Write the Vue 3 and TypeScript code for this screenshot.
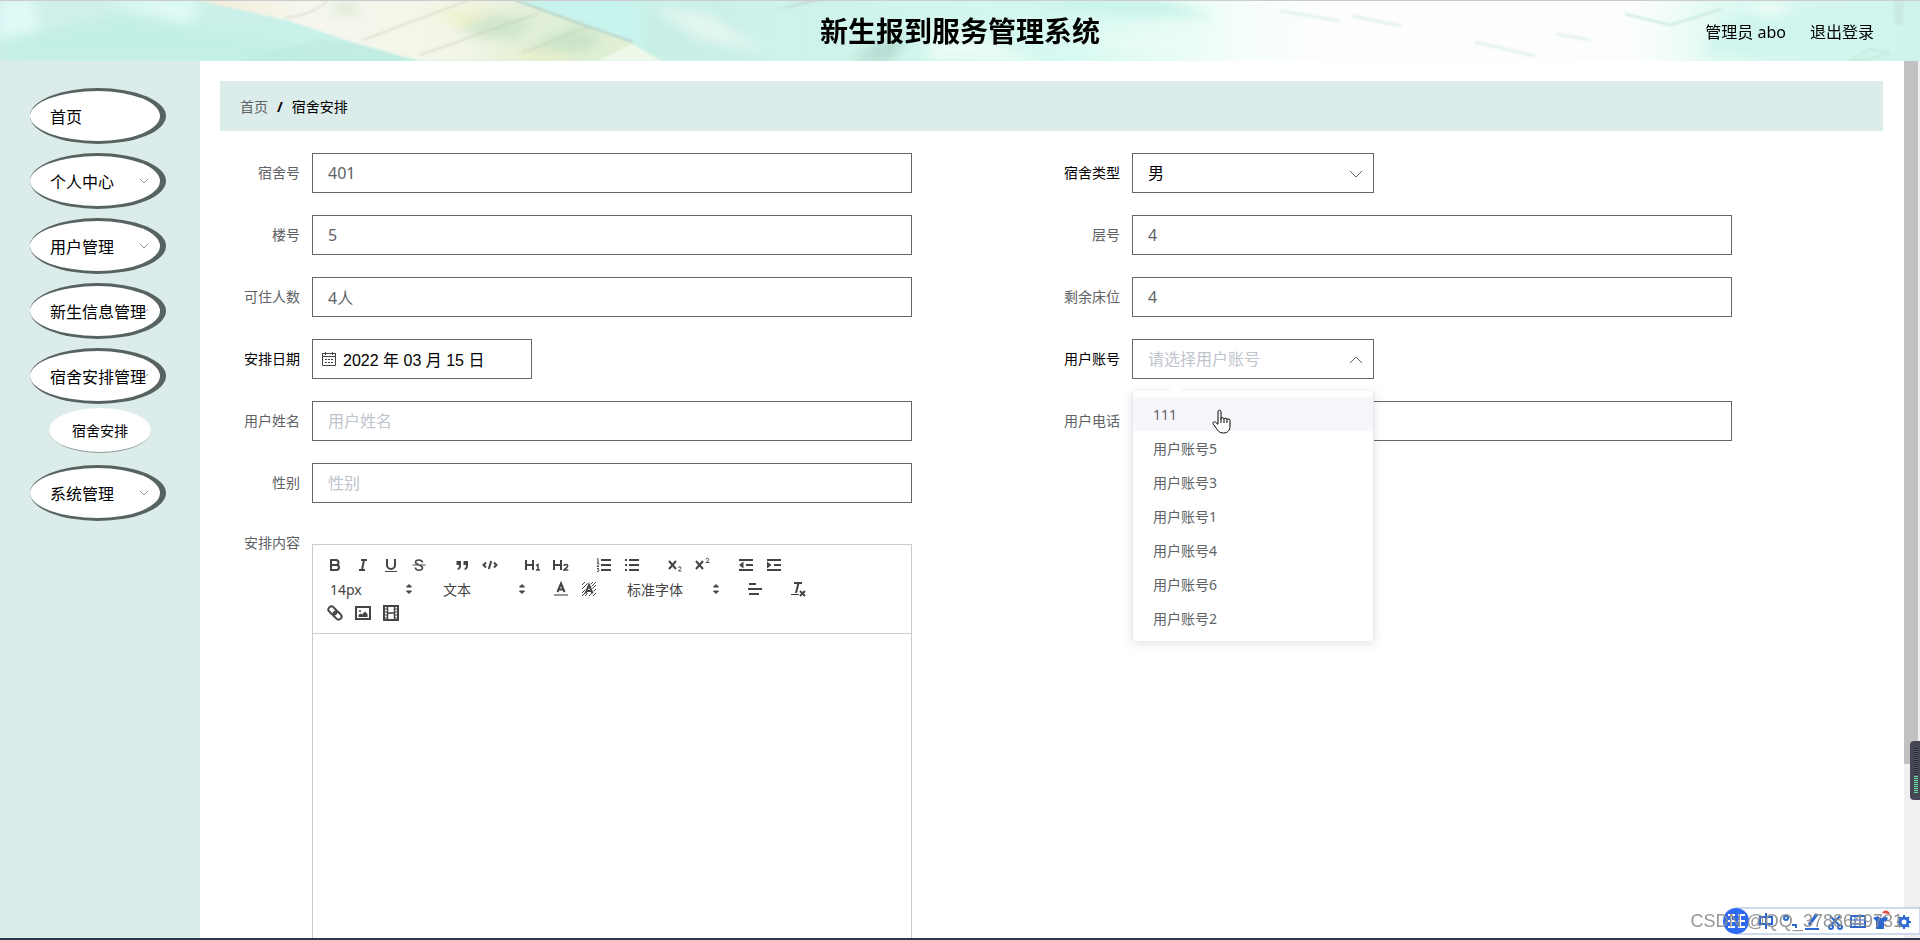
<script setup lang="ts">
import { ref } from 'vue'

interface MenuItem {
  label: string
  arrow: boolean
  children?: string[]
}

interface Tool {
  name: string
  body: string
}

interface Picker {
  label: string
  options: string[]
  wide?: boolean
}

interface ToolGroup {
  tools?: Tool[]
  picker?: Picker
}

const menu: MenuItem[] = [
  { label: '首页', arrow: false },
  { label: '个人中心', arrow: true },
  { label: '用户管理', arrow: true },
  { label: '新生信息管理', arrow: true },
  { label: '宿舍安排管理', arrow: true, children: ['宿舍安排'] },
  { label: '系统管理', arrow: true },
]

const roomNo = ref('401')
const roomType = ref('男')
const building = ref('5')
const floor = ref('4')
const capacity = ref('4人')
const bedsLeft = ref('4')
const date = ref('2022 年 03 月 15 日')
const account = ref('')
const userName = ref('')
const phone = ref('')
const gender = ref('')

const accounts = ['111', '用户账号5', '用户账号3', '用户账号1', '用户账号4', '用户账号6', '用户账号2']
const hovered = ref(0)
const open = ref(true)

function choose(name: string) {
  account.value = name
  open.value = false
}

const groups: ToolGroup[] = [
  {
    tools: [
      { name: '粗体', body: '<path d="M5 4h5a2.5 2.5 0 0 1 0 5H5zM5 9h5.5a2.5 2.5 0 0 1 0 5H5z"/>' },
      { name: '斜体', body: '<path d="M7 4h6M5 14h6M10 4L8 14"/>' },
      { name: '下划线', body: '<path d="M5 3v6a4 4 0 0 0 8 0V3"/><path d="M3 15.500h12" stroke-width="1"/>' },
      { name: '删除线', body: '<path d="M2.500 9h13" stroke-width="1"/><path d="M12.500 6.500C12 3.300 5.500 3.300 5.500 6c0 1.500 1.500 2 3.500 2.700M9.500 9.300c2 .700 3 1.200 3 2.700 0 3-6.800 3-7.200-.500" stroke-width="1.600"/>' },
    ],
  },
  {
    tools: [
      { name: '引用', body: '<path class="fill" d="M3.500 5H8v4.500C8 12 7 13.500 4.500 14v-1.500C5.700 12 6 11 6 9H3.500zM10.500 5H15v4.500c0 2.500-1 4-3.500 4.500v-1.500c1.200-.500 1.500-1.500 1.500-3.500h-2.500z"/>' },
      { name: '代码', body: '<path d="M5 6.500L2.500 9 5 11.500M13 6.500L15.500 9 13 11.500M10.200 5L7.800 13"/>' },
    ],
  },
  {
    tools: [
      { name: '标题1', body: '<path d="M2 4v10M9 4v10M2 9h7"/><path d="M12 9.700l2-1.200V14M12 14h4" stroke-width="1.500"/>' },
      { name: '标题2', body: '<path d="M2 4v10M9 4v10M2 9h7"/><path d="M12 10c0-2 3.700-2 3.700 0 0 1.300-2 2-3.700 4h4.300" stroke-width="1.500"/>' },
    ],
  },
  {
    tools: [
      { name: '有序列表', body: '<path d="M6 4h10M6 9h10M6 14h10"/><path d="M2 3l1-.500V6M2 6h2M2 8c0-1 2-1 2 0S2 9.500 2 10.500h2M2 12.500h1.500L3 14c2 0 1 2-1 1.500" stroke-width="1"/>' },
      { name: '无序列表', body: '<path d="M6 4h10M6 9h10M6 14h10M2 4h2M2 9h2M2 14h2"/>' },
    ],
  },
  {
    tools: [
      { name: '下标', body: '<path d="M3 5l7 8M10 5l-7 8"/><path d="M12.500 12c0-1.600 2.500-1.600 2.500 0 0 1-1.500 1.500-2.500 3H15.500" stroke-width="1"/>' },
      { name: '上标', body: '<path d="M2 5l7 8M9 5l-7 8"/><path d="M12 3.500c0-1.600 2.700-1.600 2.700 0 0 1-1.500 1.500-2.700 3H15.500" stroke-width="1"/>' },
    ],
  },
  {
    tools: [
      { name: '减少缩进', body: '<path d="M2 4h14M9 9h7M2 14h14"/><path class="fill" d="M6.500 5.500v7L2 9z"/>' },
      { name: '增加缩进', body: '<path d="M2 4h14M9 9h7M2 14h14"/><path class="fill" d="M2 5.500v7L6.500 9z"/>' },
    ],
  },
  { picker: { label: '14px', options: ['12px', '14px', '16px', '18px'] } },
  { picker: { label: '文本', options: ['文本', '标题1', '标题2'] } },
  {
    tools: [
      { name: '文字颜色', body: '<path d="M2 15h14" class="light"/><path d="M5.500 12L9 3.500 12.500 12M6.500 9.500h5"/>' },
      { name: '背景颜色', body: '<path d="M2 5l3-3M2 9l7-7M2 13L13 2M2 16L16 2M5 16L16 5M9 16l7-7M13 16l3-3" stroke-width="1"/><path d="M6 13L9 5.500 12 13" class="halo"/><path d="M5.500 13.500L9 5 12.500 13.500M6.500 11h5"/>' },
    ],
  },
  { picker: { label: '标准字体', options: ['标准字体', '衬线字体', '等宽字体'], wide: true } },
  { tools: [{ name: '对齐', body: '<path d="M3 4h7M2 9h14M3 14h10"/>' }] },
  { tools: [{ name: '清除格式', body: '<path d="M5 3h8M9.500 3L7 13"/><path d="M2 14.500h8" stroke-width="1"/><path d="M11 11l5 5M16 11l-5 5"/>' }] },
  {
    tools: [
      { name: '链接', body: '<g transform="rotate(45 9 9)"><rect x="1" y="6" width="9" height="6" rx="3"/><rect x="8" y="6" width="9" height="6" rx="3"/></g>' },
      { name: '图片', body: '<rect x="2" y="3" width="14" height="12"/><circle class="fill" cx="6" cy="7" r="1"/><path class="fill" d="M4.500 13v-2l2-1.500 1.500 1 3-3 2.500 2.500v3z"/>' },
      { name: '视频', body: '<rect x="2" y="2" width="14" height="14"/><path d="M5.500 2v14M12.500 2v14M5.500 9h7" stroke-width="1.500"/><path d="M2 5h3M2 8h3M2 11h3M2 14h3M13 5h3M13 8h3M13 11h3M13 14h3" stroke-width="1"/>' },
    ],
  },
]
</script>

<template>
  <div class="page">
    <header class="header">
      <svg class="backdrop" viewBox="0 0 1920 61" preserveAspectRatio="none" aria-hidden="true">
        <defs>
          <linearGradient id="sky">
            <stop offset="0" stop-color="#d2efeb" />
            <stop offset="0.150" stop-color="#c8f1e9" />
            <stop offset="0.320" stop-color="#c8f4ee" />
            <stop offset="0.420" stop-color="#cef3ea" />
            <stop offset="0.560" stop-color="#d6f9f1" />
            <stop offset="0.650" stop-color="#f6fefa" />
            <stop offset="0.700" stop-color="#fefefd" />
            <stop offset="0.850" stop-color="#fcfefc" />
            <stop offset="0.910" stop-color="#daf8f1" />
            <stop offset="1" stop-color="#cff3eb" />
          </linearGradient>
          <linearGradient id="leaf">
            <stop offset="0" stop-color="#f3ead6" />
            <stop offset="0.250" stop-color="#f6f7ee" />
            <stop offset="0.600" stop-color="#f2f5e6" />
            <stop offset="0.850" stop-color="#ddeed6" />
            <stop offset="1" stop-color="#e2f0d3" />
          </linearGradient>
          <filter id="soft" x="-20%" y="-60%" width="140%" height="220%"><feGaussianBlur stdDeviation="6" /></filter>
          <filter id="fine" x="-20%" y="-60%" width="140%" height="220%"><feGaussianBlur stdDeviation="1" /></filter>
        </defs>
        <rect width="1920" height="61" fill="url(#sky)" />
        <g filter="url(#soft)">
          <path d="M0 0h34l5 36-39 6zM100 0h100l-10 25z" fill="#dff9f7" />
          <path d="M0 61V40l120-25 150 25 70 21z" fill="#c2efe4" />
          <path d="M640 0h80l50 61H640z" fill="#c8efe5" />
          <path d="M650 6l60 8 60 40-70-14z" fill="#e2f6f1" />
          <path d="M850 61l30-20 30-5-20 25z" fill="#b4dcd1" />
          <path d="M930 20l110 41h-110zM1040 40l170 15-30-20z" fill="#eafcf5" />
          <path d="M980 0h180l60 18-90-2z" fill="#c6f3e8" />
          <path d="M1720 20l50-14h130v50h-200z" fill="#d0f6ed" />
          <path d="M1740 6h60l-30 8z" fill="#fff" />
        </g>
        <g filter="url(#fine)">
          <path d="M195 0l95 21 65 22 65 18h180l35-17-60-24-57-20z" fill="url(#leaf)" />
          <g filter="url(#soft)">
            <path d="M455 28l40-14 40 6-20 20-35-3zM325 12l22-10 16 12zM515 50l60-22 30 10-20 14z" fill="#bddcc0" opacity="0.600" />
            <path d="M430 14l40-5 30 3-40 14zM480 61l60-12 60 12z" fill="#eff1c2" opacity="0.700" />
          </g>
          <path d="M598 61l34-17 30 17z" fill="#eef8e8" />
          <path d="M285 18c20-2 32-8 43-18M363 40L469 0M420 55l119-42M522 53l66-26" fill="none" stroke="#c3ccb8" stroke-width="1" />
          <path d="M515 0l66 24 52 18" fill="none" stroke="#b3d2c8" stroke-width="2" />
          <path d="M240 61l80-22 36 5 62 17z" fill="#bde9dd" opacity="0.600" />
          <path d="M770 11l40-11h15z" fill="#c2dbd3" />
          <path d="M1280 11l60 10M1352 16l50 10M1556 34l34 6M1475 42l60 14" stroke="#e4f3ec" stroke-width="3" />
          <path d="M1625 14l45 11 52-16M1850 61l20-12 20 4-30 8z" fill="none" stroke="#c6e9df" stroke-width="2" />
          <path d="M1894 0h10v25h-10z" fill="#cae9e2" />
        </g>
        <path d="M0 0h1920v1H0z" fill="#ccc" />
      </svg>
      <h1 class="title">新生报到服务管理系统</h1>
      <nav class="account">
        <a href="#profile">管理员 abo</a>
        <a href="#logout">退出登录</a>
      </nav>
    </header>

    <div class="body">
      <aside class="sidebar">
        <ul class="menu">
          <li v-for="item in menu" :key="item.label">
            <button type="button" class="menu-item">
              <span>{{ item.label }}</span>
              <svg v-if="item.arrow" class="menu-arrow" viewBox="0 0 10 6" aria-hidden="true">
                <path d="M1 1l4 4 4-4" />
              </svg>
            </button>
            <button v-for="child in item.children" :key="child" type="button" class="sub-item">{{ child }}</button>
          </li>
        </ul>
      </aside>

      <main class="main">
        <nav class="crumbs" aria-label="位置">
          <a href="#home">首页</a>
          <span class="slash">/</span>
          <span>宿舍安排</span>
        </nav>

        <form class="form" @submit.prevent>
          <div class="field">
            <label for="room-no">宿舍号</label>
            <input id="room-no" v-model="roomNo" class="box" type="text" />
          </div>
          <div class="field strong">
            <label for="room-type">宿舍类型</label>
            <div class="select-wrap">
              <select id="room-type" v-model="roomType" class="box">
                <option>男</option>
                <option>女</option>
              </select>
              <svg class="caret" viewBox="0 0 14 8" aria-hidden="true"><path d="M1 1l6 6 6-6" /></svg>
            </div>
          </div>
          <div class="field">
            <label for="building">楼号</label>
            <input id="building" v-model="building" class="box" type="text" />
          </div>
          <div class="field">
            <label for="floor">层号</label>
            <input id="floor" v-model="floor" class="box" type="text" />
          </div>
          <div class="field">
            <label for="capacity">可住人数</label>
            <input id="capacity" v-model="capacity" class="box" type="text" />
          </div>
          <div class="field">
            <label for="beds">剩余床位</label>
            <input id="beds" v-model="bedsLeft" class="box" type="text" />
          </div>
          <div class="field strong">
            <label for="date">安排日期</label>
            <div class="date-wrap">
              <svg class="calendar" viewBox="0 0 14 14" aria-hidden="true">
                <path d="M0 1.500h14M.500 1.500v12h13v-12M0 4.500h14M3.500 0v3M10.500 0v3M3 7.500h2M6 7.500h2M9 7.500h2M3 10.500h2M6 10.500h2M9 10.500h2" />
              </svg>
              <input id="date" v-model="date" class="box date" type="text" />
            </div>
          </div>
          <div class="field strong">
            <label for="account">用户账号</label>
            <div class="select-wrap">
              <select id="account" v-model="account" class="box" :class="{ empty: !account }" @mousedown.prevent="open = !open">
                <option value="">请选择用户账号</option>
                <option v-for="name in accounts" :key="name">{{ name }}</option>
              </select>
              <svg class="caret" viewBox="0 0 14 8" aria-hidden="true"><path d="M1 7l6-6 6 6" /></svg>
              <div v-if="open" class="popup" role="listbox" aria-label="用户账号">
                <button
                  v-for="(name, i) in accounts"
                  :key="name"
                  type="button"
                  role="option"
                  class="option"
                  :class="{ hover: hovered === i }"
                  @mouseenter="hovered = i"
                  @click="choose(name)"
                >{{ name }}</button>
                <svg class="pointer" viewBox="0 0 20 26" aria-hidden="true">
                  <path d="M6 15V3c0-2.500 3-2.500 3 0v7c0-2 3-1.700 3 .300 0-1.700 3-1.500 3 .500 0-1.500 3-1.200 3 1V17c0 4-2 7-6.500 7C7 24 6 21.500 4.500 19.500L1.500 15.500C0 13.500 2 12 3.700 13.300L6 15.500M9 10v4M12 10.500V14M15 11v3" />
                </svg>
              </div>
            </div>
          </div>
          <div class="field">
            <label for="user-name">用户姓名</label>
            <input id="user-name" v-model="userName" class="box" type="text" placeholder="用户姓名" />
          </div>
          <div class="field">
            <label for="phone">用户电话</label>
            <input id="phone" v-model="phone" class="box" type="text" />
          </div>
          <div class="field full">
            <label for="gender">性别</label>
            <input id="gender" v-model="gender" class="box" type="text" placeholder="性别" />
          </div>
          <div class="field full">
            <label for="content">安排内容</label>
            <div class="editor">
              <div class="toolbar">
                <div v-for="(group, g) in groups" :key="g" class="group">
                  <button v-for="tool in group.tools" :key="tool.name" type="button" class="tool" :aria-label="tool.name">
                    <svg viewBox="0 0 18 18" aria-hidden="true" v-html="tool.body"></svg>
                  </button>
                  <div v-if="group.picker" class="picker" :class="{ wide: group.picker.wide }">
                    <select :value="group.picker.label" :aria-label="group.picker.label">
                      <option v-for="o in group.picker.options" :key="o">{{ o }}</option>
                    </select>
                    <svg viewBox="0 0 18 18" aria-hidden="true">
                      <path class="arrows" d="M6.500 7L9 4.500 11.500 7zM6.500 11L9 13.500 11.500 11z" />
                    </svg>
                  </div>
                </div>
              </div>
              <textarea id="content" class="text"></textarea>
            </div>
          </div>
        </form>
      </main>
      <div class="scroll" aria-hidden="true"><div class="thumb"></div></div>
    </div>

    <div class="meter" aria-hidden="true"><i class="idle"></i><i class="level"></i></div>

    <div class="ime">
      <svg viewBox="0 0 198 28" aria-hidden="true">
        <rect x="14" y="1" width="184" height="26" fill="#fff" stroke="#9db9dc" />
        <circle cx="14" cy="14" r="13" fill="#2e6bf0" />
        <path d="M6 8h7M6 14h7M6 20h7M9 8v12M16 8h7M16 14h7M16 20h7M18 8v12" stroke="#fff" stroke-width="2" fill="none" />
        <g stroke="#2c68cf" stroke-width="2" fill="none">
          <path d="M38 10h12v7H38zM44 6v16" />
          <circle cx="64" cy="11" r="2" />
          <path d="M70 18h4v3" />
          <path d="M87 18l8-11" stroke-width="3" />
          <path d="M83 22h14M108 9l10 10M118 9l-10 10" />
          <circle cx="109" cy="20" r="2" />
          <circle cx="118" cy="20" r="2" />
          <rect x="129" y="9" width="14" height="11" />
          <path d="M130 13h12M130 17h12M133 9v10M138 9v10" stroke-width="1" />
          <circle cx="182" cy="15" r="4" stroke-width="3" />
          <path d="M182 8v3M182 19v3M175 15h3M186 15h3M177 10l3 3M184 17l3 3M187 10l-3 3M180 17l-3 3" />
        </g>
        <path d="M151 11l5-2c2 3 4 3 6 0l4 2-2 4-2-1v8h-8v-8z" fill="#2c68cf" />
        <path d="M160 6c2-4 7-3 8 1z" fill="#e24a42" />
      </svg>
    </div>
    <div class="mark">CSDN @QQ_3788649731</div>
    <div class="taskbar"></div>
  </div>
</template>

<style>
body {
  margin: 0;
  overflow: hidden;
}
</style>

<style scoped>
.page {
  height: 100vh;
  display: flex;
  flex-direction: column;
  overflow: hidden;
  position: relative;
  background: #fff;
  color: #000;
  font-family: "Noto Sans", "Noto Sans CJK SC", sans-serif;
  font-size: 14px;
}
.page *,
.page *::before {
  box-sizing: border-box;
}
button,
input,
select,
textarea {
  font: inherit;
  color: inherit;
  margin: 0;
  outline: none;
}
a {
  color: inherit;
  text-decoration: none;
}
.header {
  position: relative;
  flex: none;
  height: 61px;
  display: grid;
  grid-template-columns: 1fr auto 1fr;
  align-items: center;
}
.backdrop {
  position: absolute;
  inset: 0;
  width: 100%;
  height: 100%;
}
.title {
  position: relative;
  grid-column: 2;
  margin: 0;
  font-size: 28px;
  line-height: 60px;
  font-weight: 700;
}
.account {
  position: relative;
  justify-self: end;
  display: flex;
  gap: 24px;
  padding-right: 46px;
  font-size: 16px;
}
.body {
  flex: 1;
  min-height: 0;
  display: flex;
}
.sidebar {
  flex: none;
  width: 200px;
  background: #dcecea;
}
.menu {
  list-style: none;
  margin: 0;
  padding: 27px 0 0;
}
.menu li {
  padding: 0 34px 9px 30px;
}
.menu-item {
  display: flex;
  align-items: center;
  justify-content: space-between;
  width: 100%;
  height: 56px;
  padding: 0 11px 0 20px;
  border: solid #566361;
  border-width: 3px 6px 3px 0;
  border-radius: 50%;
  background: #fff;
  font-size: 16px;
  white-space: nowrap;
}
.menu-item span {
  position: relative;
  z-index: 1;
}
.menu-arrow {
  flex: none;
  width: 10px;
  height: 6px;
  margin-left: -7px;
  fill: none;
  stroke: #909399;
}
.sub-item {
  display: block;
  width: 102px;
  height: 45px;
  margin: 4px 0 3px 19px;
  padding: 0;
  border: solid #8a9a98;
  border-width: 0 0 1px;
  border-radius: 50%;
  background: #fff;
  font-size: 14px;
}
.main {
  flex: 1;
  min-width: 0;
  overflow: hidden;
  padding: 20px 21px 0 20px;
}
.crumbs {
  display: flex;
  align-items: center;
  gap: 9px;
  height: 50px;
  padding: 0 20px;
  background: #dcecea;
}
.crumbs a {
  color: #606266;
}
.slash {
  font-weight: 700;
}
.form {
  display: grid;
  grid-template-columns: 1fr 1fr;
  row-gap: 22px;
  padding: 22px 23px 0 0;
}
.field {
  display: flex;
  align-items: flex-start;
  color: #606266;
}
.full {
  grid-column: 1 / -1;
}
.strong {
  color: #000;
}
.field > label {
  flex: none;
  width: 92px;
  padding-right: 12px;
  line-height: 40px;
  text-align: right;
}
.box {
  width: 600px;
  height: 40px;
  padding: 0 15px;
  border: 1px solid #666;
  border-radius: 0;
  background: #fff;
  font-size: 16px;
}
.box::placeholder,
.box.empty {
  color: #c0c4cc;
}
.select-wrap,
.date-wrap {
  position: relative;
  width: 242px;
}
.date-wrap {
  width: 220px;
}
.select-wrap .box,
.date-wrap .box {
  display: block;
  width: 100%;
  appearance: none;
}
.date-wrap .date {
  padding-left: 30px;
  font-family: "Liberation Sans", "Noto Sans CJK SC", sans-serif;
}
.calendar {
  position: absolute;
  left: 10px;
  top: 13px;
  width: 14px;
  height: 14px;
  fill: none;
  stroke: #444;
}
.caret {
  position: absolute;
  right: 11px;
  top: 17px;
  width: 14px;
  height: 8px;
  fill: none;
  stroke: #606266;
}
.popup {
  position: absolute;
  z-index: 2;
  left: 0;
  top: 52px;
  width: 100%;
  padding: 6px 0;
  border: 1px solid #e4e7ed;
  border-width: 0 1px;
  border-radius: 2px;
  background: #fff;
  box-shadow: 0 2px 12px rgba(0, 0, 0, 0.12);
}
.popup::before {
  content: "";
  position: absolute;
  left: 37px;
  top: -5px;
  width: 10px;
  height: 10px;
  background: #fff;
  transform: rotate(45deg);
}
.option {
  position: relative;
  display: block;
  width: 100%;
  height: 34px;
  padding: 0 20px;
  border: 0;
  background: #fff;
  color: #606266;
  text-align: left;
}
.option.hover {
  background: #f5f7fa;
}
.pointer {
  position: absolute;
  left: 79px;
  top: 18px;
  width: 20px;
  height: 26px;
  fill: #fff;
  stroke: #000;
  pointer-events: none;
}
.editor {
  width: 600px;
  margin-top: 19px;
  border: 1px solid #ccc;
  color: #444;
}
.full:last-child > label {
  line-height: 36px;
}
.toolbar {
  display: flex;
  flex-wrap: wrap;
  padding: 8px;
  border-bottom: 1px solid #ccc;
}
.group {
  display: flex;
  margin-right: 15px;
}
.tool {
  width: 28px;
  height: 24px;
  padding: 3px 5px;
  border: 0;
  background: none;
}
.tool svg {
  display: block;
  width: 18px;
  height: 18px;
  fill: none;
  stroke: #444;
  stroke-width: 2;
}
.tool :deep(.fill) {
  fill: #444;
  stroke: none;
}
.tool :deep(.light) {
  stroke: #999;
}
.tool :deep(.halo) {
  fill: #fff;
  stroke: #fff;
  stroke-width: 4;
}
.picker {
  position: relative;
  width: 98px;
  height: 24px;
}
.picker.wide {
  width: 108px;
}
.picker select {
  display: block;
  width: 100%;
  height: 24px;
  padding: 0 0 0 9px;
  border: 0;
  background: none;
  appearance: none;
}
.picker svg {
  position: absolute;
  right: 1px;
  top: 3px;
  width: 18px;
  height: 18px;
  pointer-events: none;
}
.arrows {
  fill: #444;
  stroke: #444;
}
.text {
  display: block;
  width: 100%;
  height: 400px;
  border: 0;
  resize: none;
  padding: 12px 15px;
}
.scroll {
  flex: none;
  width: 16px;
  background: #f0f0f0;
}
.thumb {
  height: 80%;
  width: 14px;
  background: #c1c1c1;
}
.meter {
  position: absolute;
  z-index: 3;
  right: 0;
  bottom: 140px;
  width: 10px;
  height: 59px;
  padding: 7px 2px 7px 4px;
  border-radius: 4px 0 0 4px;
  background: #454754;
}
.meter i {
  display: block;
  height: 28px;
  background: repeating-linear-gradient(#23252f 0 1px, #5c5e6c 1px 2px);
}
.meter .level {
  height: 17px;
  background: repeating-linear-gradient(#6fd0a0 0 1px, #3f5b58 1px 2px);
}
.ime {
  position: absolute;
  z-index: 3;
  right: 0;
  bottom: 5px;
  width: 198px;
}
.ime svg {
  display: block;
  width: 100%;
}
.mark {
  position: absolute;
  z-index: 4;
  right: 17px;
  bottom: 8px;
  color: #8c8c8c;
  opacity: 0.9;
  font-family: "Liberation Sans", sans-serif;
  font-size: 18px;
  line-height: 22px;
}
.taskbar {
  position: absolute;
  z-index: 5;
  left: 0;
  right: 0;
  bottom: 0;
  height: 2px;
  background: #2b3a4b;
}
</style>
